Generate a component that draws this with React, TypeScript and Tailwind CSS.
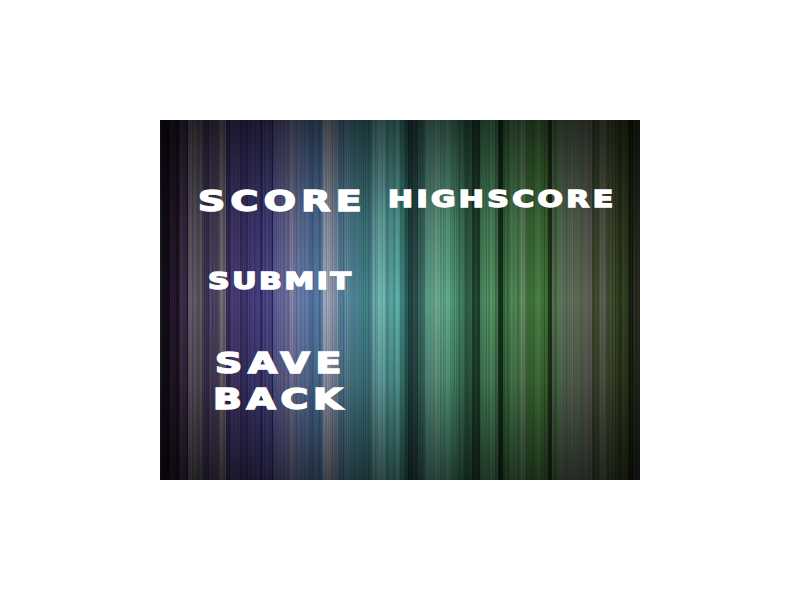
import React from 'react';

// [width in px, colour] read off the middle of the panel, left to right
const bands: [number, string][] = [
  [10, '#120c18'], [4, '#2a1a30'], [5, '#1e1226'], [8, '#35253f'], [1, '#1e1428'], [14, '#5a5360'], [2, '#4a4450'],
  [6, '#3c3052'], [8, '#4c4060'], [2, '#5a5064'], [6, '#6c6670'], [4, '#34285a'], [10, '#463a72'], [8, '#382f66'],
  [12, '#3f3a78'], [3, '#38337a'], [9, '#4a4584'], [1, '#1e2050'], [7, '#5a5c96'], [10, '#6a6a9c'], [3, '#8486aa'],
  [7, '#6c74a0'], [10, '#5f78a8'], [10, '#4f74a0'],
  [3, '#5a80ac'], [9, '#a0a8bc'], [6, '#8898b0'], [7, '#4e7c98'], [5, '#6090a4'], [10, '#488090'], [8, '#3f8088'],
  [4, '#407c88'], [6, '#6aa8a8'], [8, '#70b8b6'], [2, '#4a8c8c'], [7, '#50a09a'], [5, '#60b0a8'], [5, '#3a8078'],
  [3, '#2a5c58'], [4, '#1a3f3e'], [6, '#2a4a48'], [7, '#366a60'], [10, '#5a9a86'], [5, '#70a890'], [10, '#5ea88a'],
  [8, '#4a9070'], [7, '#3a7858'], [7, '#2e6046'], [8, '#1c4028'],
  [8, '#4a8a60'], [7, '#50925f'], [3, '#3a7050'], [5, '#143018'], [7, '#3a7040'], [10, '#4a8050'], [5, '#6a9068'],
  [10, '#3a6c34'], [7, '#447a3e'], [6, '#386830'], [4, '#182c14'], [8, '#50704c'], [10, '#5a7058'], [10, '#606c58'],
  [5, '#50604a'], [7, '#5e5e56'], [8, '#3e4a2e'], [5, '#5a5a50'], [10, '#404a30'], [13, '#2a3818'], [5, '#141c0c'],
  [7, '#24281c'],
];

function stripes() {
  const stops: string[] = [];
  let x = 0;
  let seed = 7;
  for (const [w, colour] of bands) {
    for (let i = 0; i < w; i++) {
      seed = (seed * 75 + 74) % 65537;
      const shade = (seed % 100) / 100;
      const over = shade > 0.5 ? `rgba(255,255,255,${((shade - 0.5) * 0.12).toFixed(3)})` : `rgba(0,0,0,${((0.5 - shade) * 0.3).toFixed(3)})`;
      stops.push(`linear-gradient(${over},${over}) ${x}px 0 / 1px 100% no-repeat`);
      stops.push(`linear-gradient(${colour},${colour}) ${x}px 0 / 1px 100% no-repeat`);
      x += 1;
    }
  }
  return stops.join(',');
}

const label = 'block origin-left font-bold leading-none text-white [font-family:"DejaVu_Sans",sans-serif] [-webkit-text-stroke:1.5px_white]';

export default function App() {
  return (
    <div className="flex h-[600px] w-[800px] items-center justify-center bg-white">
      <div className="relative h-[360px] w-[480px] overflow-hidden" style={{ background: stripes() }}>
        <div className="absolute inset-0 bg-[linear-gradient(to_bottom,rgba(0,0,0,0.6),rgba(0,0,0,0.18)_28%,rgba(0,0,0,0)_50%,rgba(0,0,0,0.18)_72%,rgba(0,0,0,0.6))]" />
        <div className="relative flex flex-col pt-[68px]">
          <div className="flex">
            <span className={`${label} ml-[38px] w-[190px] text-[28px] tracking-[4px] scale-x-[1.35]`}>SCORE</span>
            <span className={`${label} text-[23px] tracking-[2.6px] scale-x-[1.3]`}>HIGHSCORE</span>
          </div>
          <span className={`${label} ml-[48px] mt-[54px] text-[23px] tracking-[2px] scale-x-[1.3]`}>SUBMIT</span>
          <span className={`${label} ml-[55px] mt-[57px] text-[28px] tracking-[4.3px] scale-x-[1.35]`}>SAVE</span>
          <span className={`${label} ml-[53px] mt-[8px] text-[28px] tracking-[3.5px] scale-x-[1.35]`}>BACK</span>
        </div>
      </div>
    </div>
  );
}
